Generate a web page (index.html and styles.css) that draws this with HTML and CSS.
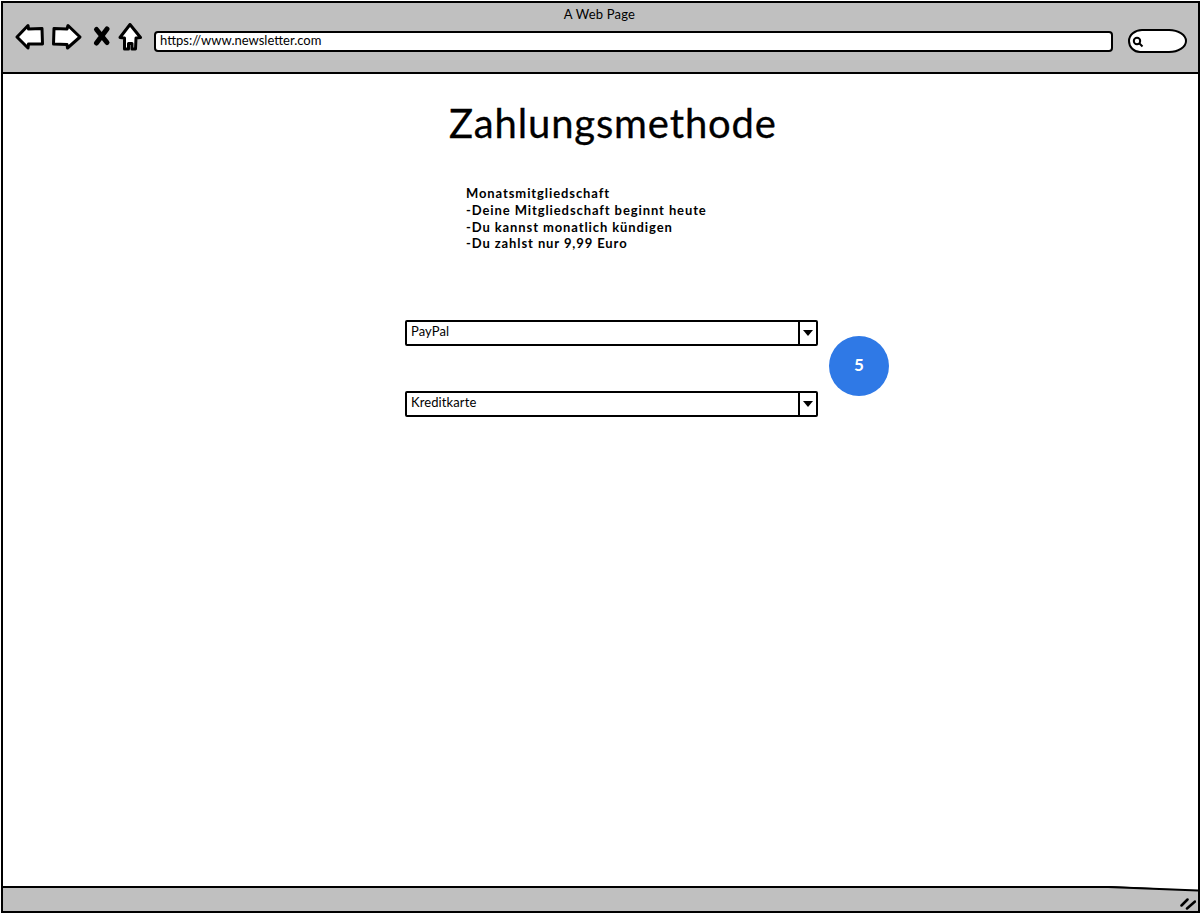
FILE: index.html
```html
<!DOCTYPE html>
<html lang="de">
<head>
  <meta charset="UTF-8">
  <meta name="viewport" content="width=device-width, initial-scale=1.0">
  <title>A Web Page</title>
  <link rel="stylesheet" href="styles.css">
</head>
<body>

  <div class="window">
    <header class="chrome">
      <div class="chrome-title">A Web Page</div>
      <div class="toolbar">
        <svg class="nav-icons" width="128" height="30" viewBox="0 0 128 30">
          <path class="nav-stroke" d="M2 14 L13 2.500 L13.500 6 L27 5.500 L27.500 21 L13.500 21 L13 25 Z"/>
          <path class="nav-stroke" d="M65 14 L53 2.500 L52 6 L39 5.500 L38.500 21 L52 21.500 L52.500 25 Z"/>
          <path class="nav-x" d="M81.500 6.500 L92 19.500 M92 6 L81.500 20"/>
          <path class="nav-stroke" d="M105 14.500 L115 1.500 L125.500 14.500 L121 15 L120.500 26 L117 26 L117 20.500 L113.500 20.500 L113.500 26 L109.500 26 L109.500 15 Z"/>
        </svg>
        <div class="url-bar">https://www.newsletter.com</div>
        <div class="search-box">
          <svg width="12" height="12" viewBox="0 0 12 12">
            <circle class="search-lens" cx="5" cy="5" r="3.200"/>
            <path class="search-lens" d="M7.500 7.500 L10.500 10.500"/>
          </svg>
        </div>
      </div>
    </header>

    <main class="page">
      <h1 class="page-title">Zahlungsmethode</h1>
      <div class="plan-info">
        <div>Monatsmitgliedschaft</div>
        <div>-Deine Mitgliedschaft beginnt heute</div>
        <div>-Du kannst monatlich kündigen</div>
        <div>-Du zahlst nur 9,99 Euro</div>
      </div>
      <div class="payment-options">
        <div class="select-box">
          <span class="select-label">PayPal</span>
          <span class="select-arrow"></span>
        </div>
        <div class="select-box">
          <span class="select-label">Kreditkarte</span>
          <span class="select-arrow"></span>
        </div>
        <div class="step-badge">5</div>
      </div>
    </main>

    <footer class="status-bar">
      <svg class="status-slope" width="90" height="6" viewBox="0 0 90 6">
        <path class="slope-fill" d="M0 0 L90 0 L90 4 Z"/>
        <path class="slope-line" d="M0 1 L90 4.500"/>
      </svg>
      <svg width="16" height="12" viewBox="0 0 16 12">
        <path class="grip" d="M1.500 7.500 L7.500 1.500 M7 10.500 L15 3.500"/>
      </svg>
    </footer>
  </div>

</body>
</html>
```

FILE: styles.css
```css
html, body {
  margin: 0;
  padding: 0;
  background-color: #fff;
}

body {
  font-family: Lato, "Open Sans", sans-serif;
  color: #000;
}

.window {
  box-sizing: border-box;
  width: 1199px;
  height: 912px;
  margin-left: 1px;
  margin-top: 1px;
  border: 2px solid #000;
  display: flex;
  flex-direction: column;
}

/* browser chrome */
.chrome {
  box-sizing: border-box;
  height: 71px;
  background-color: #c0c0c0;
  border-bottom: 2px solid #000;
  flex-shrink: 0;
}

.chrome-title {
  padding-top: 3px;
  padding-right: 2px;
  height: 17px;
  line-height: 16px;
  font-size: 13px;
  letter-spacing: 0.2px;
  text-align: center;
}

.toolbar {
  display: flex;
  align-items: flex-start;
  padding-left: 12px;
}

.nav-icons {
  flex-shrink: 0;
}

.nav-stroke {
  fill: #fff;
  stroke: #000;
  stroke-width: 3;
  stroke-linejoin: round;
}

.nav-x {
  fill: none;
  stroke: #000;
  stroke-width: 5;
  stroke-linecap: round;
}

.url-bar {
  box-sizing: border-box;
  width: 959px;
  height: 21px;
  margin-top: 8px;
  margin-left: 11px;
  padding-left: 4px;
  background-color: #fff;
  border: 2px solid #000;
  border-radius: 4px;
  font-size: 13px;
  line-height: 14px;
}

.search-box {
  box-sizing: border-box;
  width: 59px;
  height: 24px;
  margin-top: 6px;
  margin-left: 15px;
  padding-left: 2px;
  padding-top: 5px;
  background-color: #fff;
  border: 2px solid #000;
  border-radius: 14px 18px 18px 12px / 12px;
}

.search-box svg {
  display: block;
}

.search-lens {
  fill: none;
  stroke: #000;
  stroke-width: 2;
}

/* page content */
.page {
  flex: 1;
  position: relative;
  background-color: #fff;
}

.page-title {
  margin: 0;
  padding-top: 24px;
  padding-left: 446px;
  font-size: 40px;
  line-height: 50px;
  font-weight: 400;
  letter-spacing: 0.85px;
  -webkit-text-stroke: 0.3px #000;
}

.plan-info {
  margin-top: 37.300px;
  padding-left: 463px;
  font-size: 13px;
  font-weight: 700;
  line-height: 16.700px;
  letter-spacing: 0.9px;
}

.payment-options {
  position: relative;
  width: 413px;
  margin-top: 67.700px;
  margin-left: 402px;
  display: flex;
  flex-direction: column;
  gap: 45px;
}

.select-box {
  box-sizing: border-box;
  height: 26px;
  display: flex;
  border: 2px solid #000;
  border-radius: 2px;
  font-size: 13px;
  line-height: 18px;
  letter-spacing: 0.1px;
}

.select-label {
  flex: 1;
  padding-left: 4px;
}

.select-arrow {
  width: 16px;
  border-left: 2px solid #000;
  position: relative;
}

.select-arrow::after {
  content: "";
  position: absolute;
  left: 3px;
  top: 8px;
  border-left: 5px solid transparent;
  border-right: 5px solid transparent;
  border-top: 6px solid #000;
}

.step-badge {
  position: absolute;
  left: 424px;
  top: 16px;
  width: 60px;
  height: 60px;
  border-radius: 50%;
  background-color: #2f79e6;
  color: #fff;
  font-size: 17px;
  font-weight: 700;
  line-height: 58px;
  text-align: center;
}

/* status bar */
.status-bar {
  position: relative;
  box-sizing: border-box;
  height: 25px;
  flex-shrink: 0;
  background-color: #c0c0c0;
  border-top: 2px solid #000;
  display: flex;
  justify-content: flex-end;
  align-items: flex-end;
  padding-right: 2px;
  padding-bottom: 1px;
}

.status-slope {
  position: absolute;
  right: 0;
  top: -2px;
}

.slope-fill {
  fill: #fff;
}

.slope-line {
  fill: none;
  stroke: #000;
  stroke-width: 2;
}

.grip {
  fill: none;
  stroke: #000;
  stroke-width: 2.500;
  stroke-linecap: round;
}
```
